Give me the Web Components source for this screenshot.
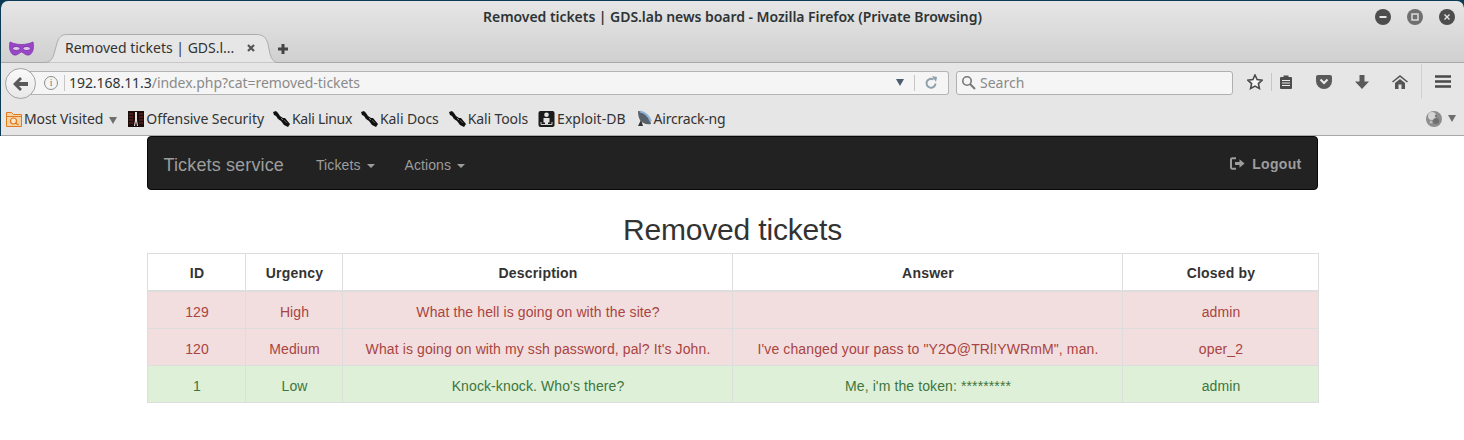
<!DOCTYPE html>
<html>
<head>
<meta charset="utf-8">
<title>Removed tickets</title>
<style>
  html, body { margin: 0; padding: 0; height: 440px; overflow: hidden; background: #fff; }
</style>
</head>
<body>
<browser-window>
  <ticket-page></ticket-page>
</browser-window>

<script>
const UI_FONT = '"Noto Sans", sans-serif';

const ICONS = {
  mask: '<svg width="25" height="16" viewBox="0 0 25 16"><path d="M1 1C5 3 9 3.5 12.5 3.5S20 3 24 1c1 5 .5 10-3 12.5-3.5 2-6-1.5-8.5-2.500-2.500 1-5 4.500-8.500 2.500C.5 11 0 6 1 1z" fill="#9b45c9" stroke="#7e34a8" stroke-width=".8"/><ellipse cx="7.300" cy="7.500" rx="3.700" ry="2.100" fill="#dcc4ea" stroke="#6d2b94" stroke-width=".8"/><ellipse cx="17.700" cy="7.500" rx="3.700" ry="2.100" fill="#dcc4ea" stroke="#6d2b94" stroke-width=".8"/></svg>',
  kali: '<svg width="17" height="16" viewBox="0 0 17 16"><path d="M0 1l3-1 2 2 2 3 3 2 2 0 5 6-2 3-4-2-3-4-3-2-2-3-2-1z" fill="#111"/><path d="M8 7l2 2" stroke="#888" stroke-width="1"/><path d="M11 9l3 3" stroke="#555" stroke-width="1"/></svg>',
  offsec: '<svg width="16" height="16" viewBox="0 0 16 16"><rect width="16" height="16" fill="#1a0d0c"/><path d="M1 3h4M1 6h4M1 9h4M1 12h4M11 3h4M11 6h4M11 9h4M11 12h4" stroke="#5a1f1a" stroke-width="1.400"/><path d="M7 1h2v8l1 6H9L8 10l-1 5H6l1-6z" fill="#e4e0dc"/></svg>',
  exploit: '<svg width="17" height="16" viewBox="0 0 17 16"><rect x=".5" width="16" height="16" rx="2" fill="#1b1b1b"/><circle cx="8.500" cy="3.800" r="2.300" fill="#e2e2e2"/><path d="M5.500 7h6v4.500H10V13H7v-1.500H5.500z" fill="#e2e2e2"/><path d="M3 11v2.500h11V11" fill="none" stroke="#cfcfcf"/></svg>',
  dish: '<svg width="16" height="17" viewBox="0 0 16 17"><path d="M2 1c6 0 12 6 13 13-5 1-9-1-11-4C2.500 7.500 2 4 2 1z" fill="#59626a"/><path d="M4 1.500c5 1 9 5 11 10" stroke="#8fb3d6" stroke-width="2.200" fill="none"/><path d="M5 10l-3 6h5z" fill="#333"/></svg>',
  folder: '<svg width="16" height="16" viewBox="0 0 16 16"><path d="M.5 1.500h5l2 2h8v12H.5z" fill="#f6d3a6" stroke="#e07a1c"/><path d="M.5 5.500h15" stroke="#e07a1c"/><circle cx="7.500" cy="10" r="3" fill="#fbe8d0" stroke="#e07a1c" stroke-width="1.200"/><path d="M9.500 12l3 2" stroke="#e07a1c" stroke-width="1.400"/></svg>',
  caret: '<svg width="8" height="7" viewBox="0 0 8 7"><path d="M0 0h8L4 7z" fill="#6e6e6e"/></svg>',
  globe: '<svg width="16" height="16" viewBox="0 0 16 16"><circle cx="8" cy="8" r="8" fill="#8d8d8d"/><circle cx="6" cy="5" r="4" fill="#d4d4d4"/><circle cx="10" cy="10" r="3" fill="#6f6f6f"/><circle cx="5" cy="11" r="1.500" fill="#bdbdbd"/><circle cx="10" cy="5" r="1.200" fill="#777"/></svg>',
  logout: '<svg width="15" height="13" viewBox="0 0 15 13"><path d="M6 1.200H2.400A1.400 1.400 0 0 0 1 2.600v7.800a1.400 1.400 0 0 0 1.400 1.400H6" fill="none" stroke="currentColor" stroke-width="2"/><path d="M5 5h4.500V2.200L14.600 6.500l-5.100 4.300V8H5z" fill="currentColor"/></svg>'
};

class WindowButton extends HTMLElement {
  constructor() {
    super();
    this.attachShadow({ mode: 'open' });
  }
  connectedCallback() {
    const glyphs = {
      min: '<rect x="4.500" y="7" width="7" height="2" fill="#e6e6e6"/>',
      max: '<rect x="5" y="5" width="6" height="6" fill="none" stroke="#dcdcdc" stroke-width="1.500"/>',
      close: '<path d="M5.500 5.500l5 5m0-5l-5 5" stroke="#e6e6e6" stroke-width="1.400"/>'
    };
    const kind = this.getAttribute('kind');
    const fill = kind === 'max' ? '#6f6f6f' : '#4d4d4d';
    this.shadowRoot.innerHTML = `
      <style>:host { display: block; width: 16px; height: 16px; } svg { display: block; }</style>
      <svg width="16" height="16" viewBox="0 0 16 16"><circle cx="8" cy="8" r="8" fill="${fill}"/>${glyphs[kind]}</svg>`;
  }
}

class BookmarkItem extends HTMLElement {
  constructor() {
    super();
    this.attachShadow({ mode: 'open' });
  }
  connectedCallback() {
    this.shadowRoot.innerHTML = `
      <style>
        :host { display: flex; align-items: center; gap: 2px; font: 14px ${UI_FONT}; color: #333; white-space: nowrap; }
        svg { display: block; }
      </style>
      ${ICONS[this.getAttribute('icon')]}<slot></slot>`;
  }
}

class BrowserWindow extends HTMLElement {
  constructor() {
    super();
    this.attachShadow({ mode: 'open' });
  }
  connectedCallback() {
    this.shadowRoot.innerHTML = `
      <style>
        :host { display: block; background: #0d3b55; }
        .frame { border-radius: 7px 7px 0 0; overflow: hidden; margin-left: 1px; padding-top: 1px; }
        .top { height: 62px; background: linear-gradient(#e6e6e6, #d0d0d0); border-radius: 7px 7px 0 0; display: flex; flex-direction: column; box-sizing: border-box; border-bottom: 1px solid #a8a8a8; }
        .title { height: 32px; padding-bottom: 2px; box-sizing: border-box; display: flex; align-items: center; justify-content: center; position: relative; font: 600 14px ${UI_FONT}; letter-spacing: -.05px; color: #2e3436; }
        .win { position: absolute; right: 9px; top: 8px; display: flex; gap: 16px; }
        .tabs { flex: 1; display: flex; align-items: flex-end; padding-left: 8px; }
        .mask { margin-bottom: 5px; height: 16px; }
        .tab { position: relative; margin: 0 0 -1px 10px; width: 234px; height: 29px; box-sizing: border-box; display: flex; align-items: center; padding: 0 23px 2px 21px; font: 14px ${UI_FONT}; color: #333; }
        .tab > svg { position: absolute; left: 0; top: 0; }
        .tab span { position: relative; flex: 1; white-space: nowrap; }
        .x { position: relative; display: block; }
        .plus { margin: 0 0 8px 0; }
        .nav { height: 37px; background: #e6e6e6; display: flex; align-items: center; position: relative; padding: 0 0 0 20px; box-sizing: border-box; }
        .back { position: absolute; left: 4px; top: 5px; width: 31px; height: 31px; box-sizing: border-box; border-radius: 50%; border: 1px solid #a2a2a2; background: linear-gradient(#fafafa, #e8e8e8); display: flex; align-items: center; justify-content: center; }
        .url { margin-top: 3px; width: 928px; height: 24px; box-sizing: border-box; border: 1px solid #b4b4b4; border-left: 0; border-radius: 0 3px 3px 0; background: #f5f5f5; display: flex; align-items: center; padding: 0 0 1px 23px; font: 14px ${UI_FONT}; letter-spacing: -.05px; color: #8a8a8a; }
        .info { width: 14px; height: 14px; border: 1px solid #8d8d8d; border-radius: 50%; box-sizing: border-box; font: 10px/12px "Liberation Serif", serif; text-align: center; color: #777; margin-right: 6px; }
        .sep { width: 1px; height: 16px; background: #c6c6c6; flex: none; }
        .url b { font-weight: 400; color: #2e3436; margin-left: 4px; }
        .spacer { flex: 1; }
        .search { margin: 3px 0 0 7px; width: 277px; height: 24px; box-sizing: border-box; border: 1px solid #b0b0b0; border-radius: 3px; background: #f5f5f5; display: flex; align-items: center; gap: 4px; padding: 0 0 1px 4px; font: 14px ${UI_FONT}; color: #8a8a8a; }
        .tools { display: flex; align-items: center; margin-left: 14px; height: 37px; }
        .tools svg { display: block; flex: none; }
        .bm { height: 36px; box-sizing: border-box; background: #e6e6e6; border-bottom: 1px solid #a8a8a8; display: flex; align-items: center; padding: 2px 8px 0 5px; }
        .bm .gap { margin-left: 9px; }
        .more { margin-left: 4px; display: inline-block; vertical-align: 0; }
        .end { margin-left: auto; display: flex; align-items: center; gap: 6px; }
        .page { background: #fff; margin-left: -1px; }
      </style>
      <div class="frame">
        <div class="top">
          <div class="title">Removed tickets | GDS.lab news board - Mozilla Firefox (Private Browsing)
            <div class="win"><window-button kind="min"></window-button><window-button kind="max"></window-button><window-button kind="close"></window-button></div>
          </div>
          <div class="tabs">
            <div class="mask">${ICONS.mask}</div>
            <div class="tab">
              <svg width="234" height="29" viewBox="0 0 234 29"><path d="M0 28.500C6 28.500 8 26 10 20L13 9C15 3 17 .5 24 .5H212C219 .5 222 3 224 10L226 20C228 26 230 28.500 234 28.500" fill="#e6e6e6" stroke="#adadad"/></svg>
              <span>Removed tickets | GDS.l...</span>
              <svg class="x" width="8" height="8" viewBox="0 0 8 8" style="position:relative"><path d="M1 1l6 6m0-6L1 7" stroke="#555" stroke-width="2.200"/></svg>
            </div>
            <svg class="plus" width="10" height="10" viewBox="0 0 10 10"><path d="M3.500 0h3v3.500H10v3H6.500V10h-3V6.500H0v-3h3.500z" fill="#444"/></svg>
          </div>
        </div>
        <div class="nav">
          <div class="back"><svg width="16" height="14" viewBox="0 0 16 14"><path d="M7 0l2 2-3 3h9v4H6l3 3-2 2L0 7z" fill="#5a5a5a"/></svg></div>
          <div class="url">
            <div class="info">i</div><div class="sep"></div><b>192.168.11.3</b>/index.php?cat=removed-tickets
            <div class="spacer"></div>
            <svg width="8" height="7" viewBox="0 0 8 7" style="margin-right:10px"><path d="M0 0h8L4 7z" fill="#4a5d6e"/></svg>
            <div class="sep"></div>
            <svg width="14" height="14" viewBox="0 0 14 14" style="margin:0 10px 0 9px"><path d="M11.500 7.500a4.500 4.500 0 1 1-2-4" fill="none" stroke="#8fa0ad" stroke-width="2"/><path d="M8 0l5 1-1 5z" fill="#8fa0ad"/></svg>
          </div>
          <div class="search">
            <svg width="15" height="15" viewBox="0 0 15 15"><circle cx="6" cy="6" r="4.200" fill="none" stroke="#777" stroke-width="1.600"/><path d="M9 9l5 5" stroke="#777" stroke-width="2"/></svg>Search
          </div>
          <div class="tools">
            <svg width="16" height="16" viewBox="0 0 16 16"><path d="M8 1l2.100 4.600 5 .6-3.700 3.400 1 4.900L8 12.100l-4.400 2.400 1-4.900L.9 6.200l5-.6z" fill="#f6f6f6" stroke="#4a4a4a" stroke-width="1.600"/></svg>
            <div class="sep" style="margin:0 7px 0 8px;height:18px"></div>
            <svg width="14" height="14" viewBox="0 0 14 14"><path d="M1 3a1 1 0 0 1 1-1h2.500V.5h5V2H12a1 1 0 0 1 1 1v10a1 1 0 0 1-1 1H2a1 1 0 0 1-1-1z" fill="#4d4d4d"/><path d="M3 5.500h8M3 8h8M3 10.500h8" stroke="#ececec"/></svg>
            <svg width="16" height="14" viewBox="0 0 16 14" style="margin-left:23px"><path d="M2 0h12a2 2 0 0 1 2 2v4a8 8 0 0 1-16 0V2a2 2 0 0 1 2-2z" fill="#5a5a5a"/><path d="M4.500 4.500L8 8l3.500-3.500" fill="none" stroke="#ececec" stroke-width="2"/></svg>
            <svg width="14" height="14" viewBox="0 0 14 14" style="margin-left:23px"><path d="M4.500 0h5v6.500H14L7 14 0 6.500h4.500z" fill="#5a5a5a"/></svg>
            <svg width="16" height="14" viewBox="0 0 16 14" style="margin-left:23px"><path d="M8 0l8 6.500-1 1L8 2 1 7.500l-1-1z" fill="#555"/><path d="M3 8l5-4 5 4v6H9.500V9.500h-3V14H3z" fill="#555"/></svg>
            <div class="sep" style="margin:0 13px;height:35px;background:#d2d2d2"></div>
            <svg width="16" height="13" viewBox="0 0 16 13"><path d="M0 1.500h16M0 6.500h16M0 11.500h16" stroke="#4a4a4a" stroke-width="2.400"/></svg>
          </div>
        </div>
        <div class="bm">
          <bookmark-item icon="folder" style="letter-spacing:-.1px">Most Visited<span class="more">${ICONS.caret}</span></bookmark-item>
          <bookmark-item icon="offsec" style="margin-left:11px;letter-spacing:-.05px">Offensive Security</bookmark-item>
          <bookmark-item class="gap" icon="kali" style="letter-spacing:-.3px">Kali Linux</bookmark-item>
          <bookmark-item class="gap" icon="kali" style="letter-spacing:-.1px">Kali Docs</bookmark-item>
          <bookmark-item class="gap" icon="kali" style="letter-spacing:-.1px;margin-left:10px">Kali Tools</bookmark-item>
          <bookmark-item class="gap" icon="exploit" style="margin-left:10px">Exploit-DB</bookmark-item>
          <bookmark-item class="gap" icon="dish" style="letter-spacing:-.2px;margin-left:10px">Aircrack-ng</bookmark-item>
          <div class="end">${ICONS.globe}${ICONS.caret}</div>
        </div>
      </div>
      <div class="page"><slot></slot></div>`;
  }
}

class DropdownLink extends HTMLElement {
  constructor() {
    super();
    this.attachShadow({ mode: 'open' });
  }
  connectedCallback() {
    this.shadowRoot.innerHTML = `
      <style>
        :host { display: flex; align-items: center; padding: 0 15px; color: #9d9d9d; font-size: 14px; letter-spacing: .1px; }
        i { display: inline-block; width: 0; height: 0; margin-left: 6px; margin-top: 2px; border-top: 4px solid #9d9d9d; border-left: 4px solid transparent; border-right: 4px solid transparent; }
      </style>
      <slot></slot><i></i>`;
  }
}

class AppNavbar extends HTMLElement {
  constructor() {
    super();
    this.attachShadow({ mode: 'open' });
  }
  connectedCallback() {
    this.shadowRoot.innerHTML = `
      <style>
        :host { display: flex; align-items: center; box-sizing: border-box; height: 54px; margin-right: -1px; padding-top: 3px; background: #222; border: 1px solid #080808; border-radius: 4px; font-family: "Liberation Sans", Arial, sans-serif; }
        .brand { padding: 1px 17px 0 16px; font-size: 18px; letter-spacing: .14px; color: #9d9d9d; }
        .right { margin-left: auto; padding: 0 15px 2px 0; display: flex; align-items: center; gap: 7px; color: #9d9d9d; font-size: 14px; font-weight: bold; letter-spacing: .3px; }
        svg { display: block; }
      </style>
      <div class="brand">Tickets service</div>
      <dropdown-link>Tickets</dropdown-link>
      <dropdown-link>Actions</dropdown-link>
      <div class="right">${ICONS.logout}<span>Logout</span></div>`;
  }
}

class TicketsTable extends HTMLElement {
  constructor() {
    super();
    this.attachShadow({ mode: 'open' });
  }
  connectedCallback() {
    const rows = [
      ['danger', '129', 'High', 'What the hell is going on with the site?', '', 'admin'],
      ['danger', '120', 'Medium', "What is going on with my ssh password, pal? It's John.", 'I\'ve changed your pass to "Y2O@TRl!YWRmM", man.', 'oper_2'],
      ['success', '1', 'Low', "Knock-knock. Who's there?", "Me, i'm the token: *********", 'admin']
    ];
    const esc = s => s.replace(/&/g, '&amp;').replace(/</g, '&lt;');
    this.shadowRoot.innerHTML = `
      <style>
        :host { display: block; font: 14px/20px "Liberation Sans", Arial, sans-serif; color: #333; }
        table { width: 1171px; border-collapse: collapse; table-layout: fixed; }
        th, td { border: 1px solid #ddd; padding: 10px 7px 6px 9px; text-align: center; letter-spacing: .11px; }
        th { border-bottom-width: 2px; padding: 9px 7px 7px 9px; height: 20px; letter-spacing: .2px; }
        .danger td { background: #f2dede; color: #a94442; }
        .success td { background: #dff0d8; color: #3c763d; }
      </style>
      <table>
        <colgroup><col style="width:98px"><col style="width:97px"><col style="width:390px"><col style="width:390px"><col style="width:196px"></colgroup>
        <tr><th>ID</th><th>Urgency</th><th>Description</th><th>Answer</th><th>Closed by</th></tr>
        ${rows.map(r => `<tr class="${r[0]}">${r.slice(1).map(c => `<td>${esc(c)}</td>`).join('')}</tr>`).join('')}
      </table>`;
  }
}

class TicketPage extends HTMLElement {
  constructor() {
    super();
    this.attachShadow({ mode: 'open' });
  }
  connectedCallback() {
    this.shadowRoot.innerHTML = `
      <style>
        :host { display: block; width: 1170px; margin: 0 auto; }
        h2 { margin: 23px -1px 7px 1px; font: 500 30px/33px "Liberation Sans", Arial, sans-serif; letter-spacing: -.17px; color: #333; text-align: center; }
      </style>
      <app-navbar></app-navbar>
      <h2>Removed tickets</h2>
      <tickets-table></tickets-table>`;
  }
}

customElements.define('window-button', WindowButton);
customElements.define('bookmark-item', BookmarkItem);
customElements.define('browser-window', BrowserWindow);
customElements.define('dropdown-link', DropdownLink);
customElements.define('app-navbar', AppNavbar);
customElements.define('tickets-table', TicketsTable);
customElements.define('ticket-page', TicketPage);
</script>
</body>
</html>
